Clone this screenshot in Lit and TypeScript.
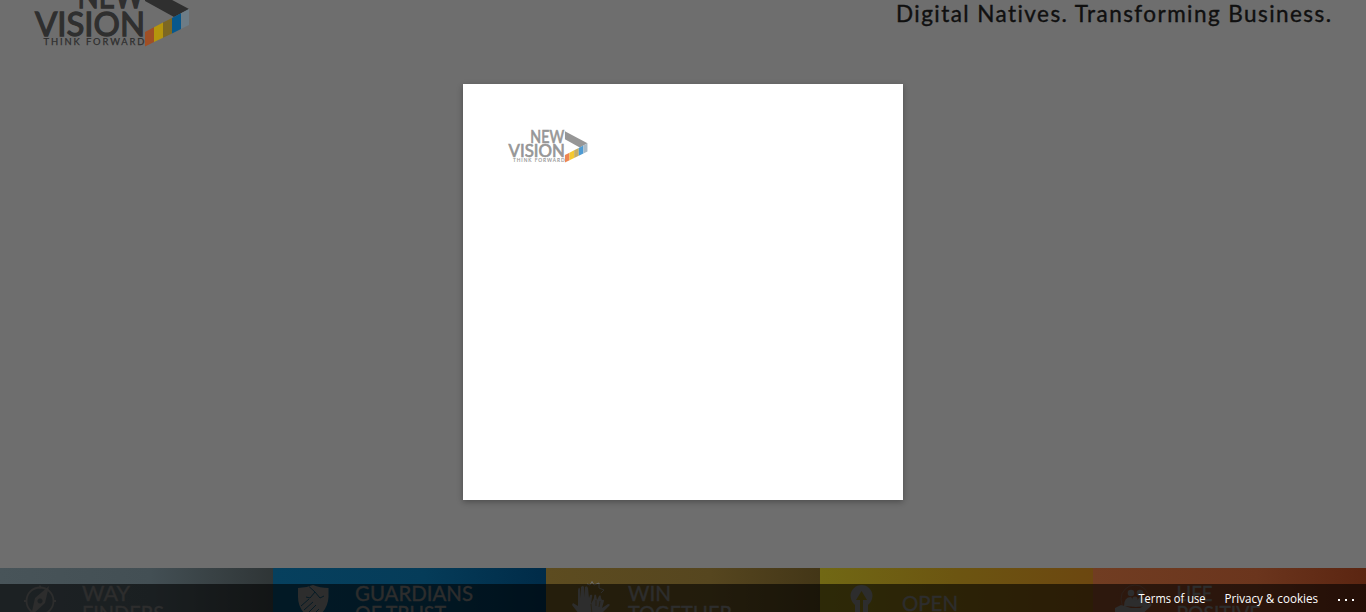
import { LitElement, html, svg, css } from "lit";
import { customElement, property } from "lit/decorators.js";

@customElement("brand-logo")
class BrandLogo extends LitElement {
  @property({ type: Boolean, reflect: true }) light = false;

  static styles = css`
    :host { display: block; --ink: #2f2f2f; --c1: #a04f25; --c2: #b5950d; --c3: #7c6722; --c4: #07588c; --c5: #6d7c86; }
    :host([light]) { --ink: #969696; --c1: #ee8652; --c2: #f5c92e; --c3: #c5ad63; --c4: #4d9bd3; --c5: #a9bac6; }
    svg { display: block; width: 100%; height: 100%; overflow: visible; }
    text { font-family: Lato, "Liberation Sans", sans-serif; font-weight: 400; fill: var(--ink); stroke: var(--ink); }
    .big { font-size: 33.5px; stroke-width: 1.3px; }
    .small { font-size: 9.4px; stroke-width: .25px; }
    .ink { fill: var(--ink); }
    .c1 { fill: var(--c1); } .c2 { fill: var(--c2); } .c3 { fill: var(--c3); }
    .c4 { fill: var(--c4); } .c5 { fill: var(--c5); }
  `;

  render() {
    return html`<svg viewBox="0 0 156 64">
      <text class="big" x="43.500" y="24.500" textLength="66" lengthAdjust="spacingAndGlyphs">NEW</text>
      <text class="big" x="1" y="52.800" textLength="110" lengthAdjust="spacingAndGlyphs">VISION</text>
      <text class="small" x="9.500" y="62.300" textLength="101">THINK FORWARD</text>
      <path class="ink" d="M111 2.500 155 26 140 34 111 18Z" />
      <path class="c1" d="M111 49 120 44.300V59L111 63.500Z" />
      <path class="c2" d="M120 44.300 129 39.600V54.800L120 59Z" />
      <path class="c3" d="M129 39.600 138 35V50.400L129 54.800Z" />
      <path class="c4" d="M138 35 147 30.300V46L138 50.400Z" />
      <path class="c5" d="M147 30.300 155 26V42L147 46Z" />
    </svg>`;
  }
}

interface Tile {
  tone: string;
  x: number;
  lines: { text: string; width: number; y: number }[];
  icon: unknown;
}

const tiles: Tile[] = [
  {
    tone: "slate", x: 82,
    lines: [{ text: "WAY", width: 48, y: 33 }, { text: "FINDERS", width: 82, y: 53 }],
    icon: svg`<circle cx="40" cy="33" r="13.500" fill="none" class="line" stroke-width="1.800"/>
      <path class="line" fill="none" stroke-width="1.800" d="M40 17.500v3M24 33h3M53 33h3"/>
      <path fill-rule="evenodd" d="M49 18 45 35 31 48 35 30ZM40 30.500a2.500 2.500 0 1 0 .1 0Z"/>`,
  },
  {
    tone: "blue", x: 82,
    lines: [{ text: "GUARDIANS", width: 118, y: 33 }, { text: "OF TRUST", width: 91, y: 53 }],
    icon: svg`<path d="M25 20Q33 20 40 17Q47 20 55.500 20V29Q55 40 46 48H34Q25 40 25 29Z"/>
      <path class="cut" fill="none" stroke-width=".9" d="M36 18.500 42 24 47 30 51 28M42 24 37 30 33 29M28 38 36 31M31 42 40 34M35 45 43 37M39 48 46 41"/>`,
  },
  {
    tone: "gold", x: 82,
    lines: [{ text: "WIN", width: 43, y: 33 }, { text: "TOGETHER", width: 104, y: 53 }],
    icon: svg`<path d="M33 46 26 37 27 35 32 38 32 22Q33 18 34 21L35 30V19Q37 17 38 19L39 29V19Q41 17 42 20L43 30 44 27Q47 26 46 29L45 36 48 30Q48 25 50 27L51 32 53 28Q55 26 55 30L56 32Q58 31 58 33L56 40 62 36Q65 36 63 38L55 46Z"/>
      <path class="cut-gold" fill="none" stroke-width=".7" d="M45 36 46 46M50 32V38M54 33 53 39"/>
      <path class="line" fill="none" stroke-width="1" d="M41 16 44 17 46 13.500 48 17 53 15 53 20 58 22 55 25"/>`,
  },
  {
    tone: "yellow", x: 82,
    lines: [{ text: "OPEN", width: 56, y: 43 }],
    icon: svg`<path d="M41.500 17A11 11 0 0 1 52.500 28Q52 34 48 37V48H43V32H47L41.500 23 36 32H40V48H35V37Q31 34 30.500 28A11 11 0 0 1 41.500 17Z"/>`,
  },
  {
    tone: "orange", x: 83.5,
    lines: [{ text: "LIFE", width: 36, y: 33 }, { text: "POSITIVE", width: 84, y: 53 }],
    icon: svg`<circle cx="42" cy="31" r="14" fill="none" class="line" stroke-width=".4"/>
      <circle cx="38" cy="25" r="3.300"/><circle cx="47" cy="25" r="3.300"/><circle cx="42" cy="31" r="2.600"/>
      <path d="M31 38Q31 29 38 29Q42 36 47 29Q54 29 54 38L43 39ZM22 40 28 37 38 40H47L57 35Q60 36 57 39L47 48H22Z"/>`,
  },
];

@customElement("app-root")
class AppRoot extends LitElement {
  static styles = css`
    :host {
      display: grid; grid-template: 612px / 1366px; width: 1366px; height: 612px;
      overflow: hidden; background: #6e6e6e; position: relative;
    }
    .page, .front { grid-area: 1 / 1; min-width: 0; min-height: 0; }
    .page { display: flex; flex-direction: column; justify-content: space-between; height: 612px; }
    .header { display: flex; justify-content: space-between; height: 47px; padding: 0 35px 0 34px; }
    .header brand-logo { width: 156px; height: 64px; margin-top: -17px; }
    .slogan { display: block; width: 436px; height: 34px; overflow: visible; }
    .slogan text {
      font: 400 22.5px Lato, "Liberation Sans", sans-serif; font-variant-ligatures: none;
      fill: #101010; stroke: #101010; stroke-width: .4px;
    }
    .tiles { display: grid; grid-template-columns: repeat(5, 1fr); height: 44px; }
    .tile { overflow: hidden; }
    .tile svg { display: block; width: 273px; height: 44px; }
    .tile text, .tile svg { fill: #707070; }
    .tile text { font: 400 20.5px Lato, "Liberation Sans", sans-serif; stroke: #707070; stroke-width: .4px; }
    .line { stroke: #707070; }
    .cut { stroke: #063e59; }
    .cut-gold { stroke: #5d4c20; }
    .slate { background: linear-gradient(90deg, #485459 0%, #434f54 55%, #2f3536 100%); }
    .blue { background: linear-gradient(90deg, #06405e, #053c59 55%, #002b48); }
    .gold { background: linear-gradient(90deg, #5d4c20, #56461f 60%, #433617); }
    .yellow { background: linear-gradient(90deg, #716814, #6c5511 50%, #6c4710); }
    .orange { background: linear-gradient(90deg, #713d22, #6b351d 60%, #5b2511); }
    .front { display: grid; justify-content: center; align-content: start; padding-top: 84px; }
    .dialog { box-sizing: border-box; width: 440px; height: 416px; padding: 45.5px 44.5px; background: #fff; box-shadow: 0 2px 6px rgba(0, 0, 0, .3); }
    .dialog brand-logo { width: 80px; height: 32.8px; }
    .footer { position: absolute; left: 0; right: 0; bottom: 0; height: 28px; background: rgba(0, 0, 0, .6); display: flex; justify-content: flex-end; }
    .footer svg { display: block; width: 236px; height: 28px; }
    .footer text { font: 12px "Open Sans", "Noto Sans", sans-serif; fill: #fff; }
    .footer rect { fill: #fff; }
  `;

  render() {
    return html`
      <div class="page">
        <header class="header">
          <brand-logo></brand-logo>
          <svg class="slogan"><text x="1" y="22" textLength="435">Digital Natives. Transforming Business.</text></svg>
        </header>
        <div class="tiles">
          ${tiles.map((t) => html`<div class="tile ${t.tone}">
            <svg viewBox="0 0 273 44">${t.icon}
              ${t.lines.map((l) => svg`<text x=${t.x} y=${l.y} textLength=${l.width} lengthAdjust="spacingAndGlyphs">${l.text}</text>`)}
            </svg>
          </div>`)}
        </div>
      </div>
      <main class="front"><section class="dialog"><brand-logo light></brand-logo></section></main>
      <footer class="footer">
        <svg>
          <text x="8.500" y="19" textLength="67" lengthAdjust="spacingAndGlyphs">Terms of use</text>
          <text x="94.500" y="19" textLength="93.500" lengthAdjust="spacingAndGlyphs">Privacy &amp; cookies</text>
          <rect x="208" y="15" width="2" height="2" /><rect x="215" y="15" width="2" height="2" /><rect x="222" y="15" width="2" height="2" />
        </svg>
      </footer>`;
  }
}
